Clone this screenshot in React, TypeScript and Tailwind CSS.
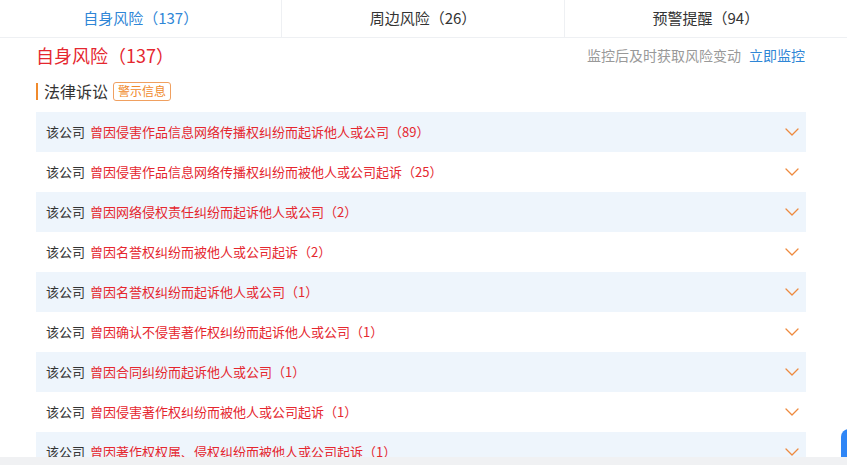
import React from 'react';

const TABS = [
  { label: '自身风险（137）', active: true },
  { label: '周边风险（26）', active: false },
  { label: '预警提醒（94）', active: false },
];

const ROWS = [
  '曾因侵害作品信息网络传播权纠纷而起诉他人或公司（89）',
  '曾因侵害作品信息网络传播权纠纷而被他人或公司起诉（25）',
  '曾因网络侵权责任纠纷而起诉他人或公司（2）',
  '曾因名誉权纠纷而被他人或公司起诉（2）',
  '曾因名誉权纠纷而起诉他人或公司（1）',
  '曾因确认不侵害著作权纠纷而起诉他人或公司（1）',
  '曾因合同纠纷而起诉他人或公司（1）',
  '曾因侵害著作权纠纷而被他人或公司起诉（1）',
  '曾因著作权权属、侵权纠纷而被他人或公司起诉（1）',
];

const Chevron = () => (
  <svg width="14" height="8" viewBox="0 0 14 8" fill="none">
    <polyline points="1,1 7,7 13,1" stroke="#ee8a3e" strokeWidth="1.3" strokeLinecap="round" strokeLinejoin="round" />
  </svg>
);

export default function App() {
  return (
    <div
      className="relative w-[847px] h-[465px] overflow-hidden bg-white text-[#333]"
      style={{ fontFamily: '"Noto Sans CJK SC", "Noto Sans", sans-serif' }}
    >
      {/* tabs */}
      <div className="grid grid-cols-3 h-[38px] border-b border-[#eef0f3]">
        {TABS.map((t, i) => (
          <div
            key={t.label}
            className={`flex items-center justify-center text-[15px] ${
              i < 2 ? 'border-r border-[#eef0f3]' : ''
            } ${t.active ? 'text-[#2f86d6]' : 'text-[#333]'}`}
          >
            {t.label}
          </div>
        ))}
      </div>

      <div className="px-[36px]">
        {/* title */}
        <div className="flex items-center justify-between h-[34px]">
          <div className="text-[18px] text-[#e5272f]">自身风险（137）</div>
          <div className="text-[14px] text-[#999] pr-[6px]">
            监控后及时获取风险变动
            <span className="ml-[8px] text-[#2f86d6]">立即监控</span>
          </div>
        </div>

        {/* section header */}
        <div className="flex items-center mt-[8px] h-[22px]">
          <span className="w-[2px] h-[17px] bg-[#f08a2c]" />
          <span className="ml-[6px] text-[16px] text-[#333]">法律诉讼</span>
          <span className="ml-[5px] px-[4px] h-[19px] flex items-center border border-[#f0a060] rounded-[3px] text-[12px] text-[#f08a2c] leading-none">
            警示信息
          </span>
        </div>

        {/* rows */}
        <div className="mt-[10px] w-[770px]">
          {ROWS.map((r, i) => (
            <div
              key={r}
              className={`flex items-center justify-between h-[40px] pl-[10px] pr-[7px] ${
                i % 2 === 0 ? 'bg-[#eef5fc]' : 'bg-white'
              }`}
            >
              <div className="text-[13px]">
                <span className="text-[#333]">该公司</span>
                <span className="ml-[5px] text-[#e5272f]">{r}</span>
              </div>
              <Chevron />
            </div>
          ))}
        </div>
      </div>

      {/* bottom strip */}
      <div className="absolute left-0 right-0 bottom-0 h-[8px] bg-[#f0f1f3]" />
      {/* floating button edge */}
      <div className="absolute right-[-12px] bottom-[8px] w-[18px] h-[28px] rounded-tl-[8px] bg-[#2f86f6]" />
    </div>
  );
}
